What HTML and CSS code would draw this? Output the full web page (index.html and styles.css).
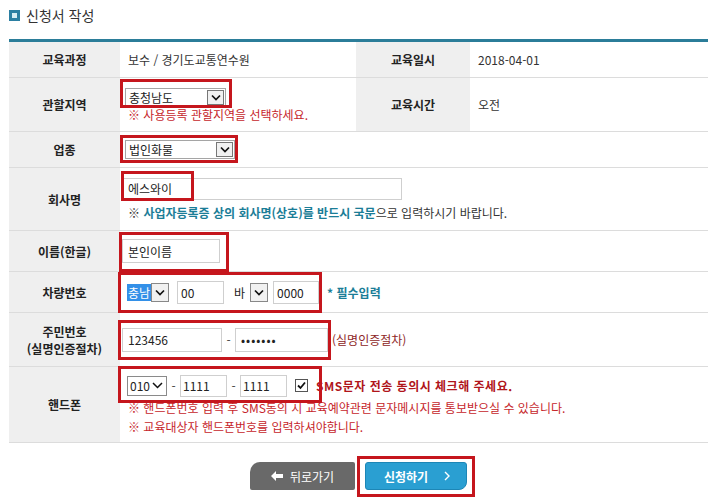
FILE: index.html
```html
<!DOCTYPE html>
<html lang="ko">
<head>
    <meta charset="UTF-8">
    <meta name="viewport" content="width=device-width, initial-scale=1.0">
    <title>신청서 작성</title>
    <link rel="stylesheet" href="styles.css">
</head>
<body>
    <div class="page">
        <h2 class="title"><span class="title-icon"></span>신청서 작성</h2>

        <table class="form-table">
            <colgroup>
                <col class="c-label">
                <col class="c-val1">
                <col class="c-label2">
                <col class="c-val2">
            </colgroup>
            <tr class="r-course">
                <th>교육과정</th>
                <td>보수 / 경기도교통연수원</td>
                <th>교육일시</th>
                <td>2018-04-01</td>
            </tr>
            <tr class="r-region">
                <th>관할지역</th>
                <td>
                    <span class="sel sel-region"><span class="sel-text">충청남도</span><span class="sel-btn"><svg width="10" height="7" viewBox="0 0 10 7"><path d="M1 1.5 L5 5.5 L9 1.5" fill="none" stroke="#111" stroke-width="1.7"/></svg></span></span>
                    <p class="note note-tight red">※ 사용등록 관할지역을 선택하세요.</p>
                </td>
                <th>교육시간</th>
                <td>오전</td>
            </tr>
            <tr class="r-biz">
                <th>업종</th>
                <td colspan="3">
                    <span class="sel sel-biz"><span class="sel-text">법인화물</span><span class="sel-btn"><svg width="10" height="7" viewBox="0 0 10 7"><path d="M1 1.5 L5 5.5 L9 1.5" fill="none" stroke="#111" stroke-width="1.7"/></svg></span></span>
                </td>
            </tr>
            <tr class="r-company">
                <th>회사명</th>
                <td colspan="3">
                    <input type="text" class="inp inp-company" value="에스와이">
                    <p class="note">※ <b class="teal">사업자등록증 상의 회사명(상호)를 반드시 국문</b>으로 입력하시기 바랍니다.</p>
                </td>
            </tr>
            <tr class="r-name">
                <th>이름(한글)</th>
                <td colspan="3">
                    <input type="text" class="inp inp-name" value="본인이름">
                </td>
            </tr>
            <tr class="r-car">
                <th>차량번호</th>
                <td colspan="3">
                    <div class="line">
                        <span class="sel sel-flat sel-area"><span class="sel-text hl">충남</span><span class="sel-btn"><svg width="10" height="7" viewBox="0 0 10 7"><path d="M1 1.5 L5 5.5 L9 1.5" fill="none" stroke="#111" stroke-width="1.7"/></svg></span></span>
                        <input type="text" class="inp inp-car1" value="00">
                        <span class="sel sel-flat sel-kind"><span class="sel-text">바</span><span class="sel-btn"><svg width="10" height="7" viewBox="0 0 10 7"><path d="M1 1.5 L5 5.5 L9 1.5" fill="none" stroke="#111" stroke-width="1.7"/></svg></span></span>
                        <input type="text" class="inp inp-car2" value="0000">
                        <b class="teal required">* 필수입력</b>
                    </div>
                </td>
            </tr>
            <tr class="r-jumin">
                <th class="two-line">주민번호<br>(실명인증절차)</th>
                <td colspan="3">
                    <div class="line">
                        <input type="text" class="inp inp-jumin1" value="123456">
                        <span class="dash">-</span>
                        <input type="password" class="inp inp-jumin2" value="1234567">
                        <span class="brown">(실명인증절차)</span>
                    </div>
                </td>
            </tr>
            <tr class="r-phone">
                <th>핸드폰</th>
                <td colspan="3">
                    <div class="line">
                        <span class="sel sel-phone"><span class="sel-text">010</span><svg width="11" height="7" viewBox="0 0 11 7"><path d="M1 1 L5.5 5.5 L10 1" fill="none" stroke="#111" stroke-width="1.5"/></svg></span>
                        <span class="dash">-</span>
                        <input type="text" class="inp inp-phone" value="1111">
                        <span class="dash">-</span>
                        <input type="text" class="inp inp-phone" value="1111">
                        <span class="chk"><svg width="11" height="11" viewBox="0 0 11 11"><path d="M2 5.5 L4.5 8 L9 2.5" fill="none" stroke="#111" stroke-width="1.8"/></svg></span>
                        <b class="dark-red">SMS문자 전송 동의시 체크해 주세요.</b>
                    </div>
                    <p class="note red">※ 핸드폰번호 입력 후 SMS동의 시 교육예약관련 문자메시지를 통보받으실 수 있습니다.</p>
                    <p class="note red">※ 교육대상자 핸드폰번호를 입력하셔야합니다.</p>
                </td>
            </tr>
        </table>

        <div class="btns">
            <button class="btn btn-back"><svg width="12" height="10" viewBox="0 0 12 10"><path d="M0 5 L5 0 L5 3 L12 3 L12 7 L5 7 L5 10 Z" fill="#fff"/></svg>뒤로가기</button>
            <button class="btn btn-submit">신청하기<svg width="6" height="10" viewBox="0 0 6 10"><path d="M1 1 L5 5 L1 9" fill="none" stroke="#fff" stroke-width="1.4"/></svg></button>
        </div>

        <!-- red highlight boxes drawn over the form -->
        <span class="mark mark-region"></span>
        <span class="mark mark-biz"></span>
        <span class="mark mark-company"></span>
        <span class="mark mark-name"></span>
        <span class="mark mark-car"></span>
        <span class="mark mark-jumin"></span>
        <span class="mark mark-phone"></span>
        <span class="mark mark-submit"></span>
    </div>
</body>
</html>
```

FILE: styles.css
```css
body {
    margin: 0;
    background: #fff;
    font-family: "Noto Sans CJK KR", "Noto Sans", sans-serif;
    font-size: 12px;
    color: #333;
}

.page {
    position: relative;
    width: 720px;
    height: 504px;
}

.title {
    display: flex;
    align-items: center;
    gap: 6px;
    height: 30px;
    margin: 0 0 9px 9px;
    font-size: 14px;
    font-weight: normal;
    color: #333;
}

.title-icon {
    width: 11px;
    height: 11px;
    box-sizing: border-box;
    border: 3px solid #2b7fa2;
    background: #d6edf4;
}

.form-table {
    margin-left: 9px;
    width: 699px;
    table-layout: fixed;
    border-collapse: separate;
    border-spacing: 0;
    border-top: 3px solid #2b7d99;
}

.c-label { width: 111px; }
.c-val1 { width: 236px; }
.c-label2 { width: 114px; }
.c-val2 { width: 238px; }

.form-table th,
.form-table td {
    box-sizing: border-box;
    border-bottom: 1px solid #dcdcdc;
    vertical-align: middle;
    padding: 0;
    line-height: 15px;
}

.form-table th {
    background: #efefef;
    color: #222;
    font-weight: bold;
    text-align: center;
}

.form-table th.two-line {
    line-height: 17px;
}

.form-table td {
    padding-left: 8px;
    text-align: left;
}

.r-course th, .r-course td { height: 36px; }
.r-region th, .r-region td { height: 54px; }
.r-biz th, .r-biz td { height: 36px; }
.r-company th, .r-company td { height: 63px; }
.r-name th, .r-name td { height: 41px; }
.r-car th, .r-car td { height: 41px; }
.r-jumin th, .r-jumin td { height: 54px; }
.r-phone th, .r-phone td { height: 76px; }

.note {
    margin: 2px 0 0;
    line-height: 17px;
}

.note-tight {
    margin: 0;
    line-height: 15px;
}

.red { color: #c6262b; }
.teal { color: #1b7d97; }
.brown { color: #8e2626; margin-left: 4px; }
.dark-red { color: #b0151b; margin-left: 8px; letter-spacing: 0.5px; }

.line {
    display: flex;
    align-items: center;
}

/* fake select boxes */
.sel {
    display: inline-flex;
    align-items: center;
    justify-content: space-between;
    box-sizing: border-box;
    height: 19px;
    border: 1px solid #a5a5a5;
    background: #fff;
    padding: 0 1px 0 3px;
    color: #222;
    vertical-align: middle;
}

.sel-btn {
    display: flex;
    align-items: center;
    justify-content: center;
    box-sizing: border-box;
    width: 17px;
    height: 15px;
    border: 1px solid #777;
    background: #f1f1f1;
}

.sel-region {
    width: 101px;
    margin-left: -3px;
}

.sel-biz {
    width: 110px;
    margin-left: -3px;
}

.sel-flat {
    border: none;
    padding: 0;
    height: 19px;
}

.sel-flat .sel-btn {
    height: 19px;
    width: 18px;
    border-color: #888;
}

.sel-area { margin-left: -1px; }
.sel-kind { margin-left: 10px; }

.sel-kind .sel-text { width: 16px; }

.hl {
    background: #3390e8;
    color: #fff;
    padding: 1px 1px;
}

.sel-phone {
    width: 40px;
    height: 20px;
    margin-left: -1px;
    padding: 0 3px 0 2px;
    border-color: #8a8a8a;
}

/* text inputs */
.inp {
    box-sizing: border-box;
    height: 22px;
    border: 1px solid #cfcfcf;
    padding: 0 5px;
    font-family: "Noto Sans CJK KR", "Noto Sans", sans-serif;
    font-size: 12px;
    color: #222;
    background: #fff;
}

.inp-company {
    width: 280px;
    margin-left: -6px;
    display: block;
    margin-bottom: 4px;
}

.inp-name {
    width: 98px;
    height: 24px;
    margin-left: -6px;
}

.inp-car1 {
    width: 47px;
    height: 23px;
    margin-left: 8px;
    padding-left: 3px;
}

.inp-car2 {
    width: 46px;
    height: 23px;
    margin-left: 5px;
    padding-left: 3px;
}

.required { margin-left: 8px; }

.inp-jumin1 {
    width: 100px;
    height: 24px;
    margin-left: -6px;
}

.inp-jumin2 {
    width: 93px;
    height: 24px;
    letter-spacing: 1px;
}

.inp-phone {
    width: 47px;
    height: 22px;
    padding-left: 2px;
}

.dash {
    width: 13px;
    text-align: center;
    color: #444;
}

.chk {
    display: flex;
    align-items: center;
    justify-content: center;
    box-sizing: border-box;
    width: 13px;
    height: 13px;
    border: 1px solid #555;
    background: #fff;
    margin-left: 8px;
}

/* bottom buttons */
.btns {
    margin: 19px 0 0 9px;
    width: 699px;
    display: flex;
    justify-content: center;
    gap: 10px;
}

.btn {
    display: flex;
    align-items: center;
    justify-content: center;
    height: 28px;
    border: none;
    color: #fff;
    font-family: "Noto Sans CJK KR", "Noto Sans", sans-serif;
    font-size: 12px;
    cursor: pointer;
}

.btn-back {
    width: 105px;
    gap: 7px;
    background: #696969;
    border-radius: 10px 2px 2px 2px;
}

.btn-submit {
    width: 102px;
    gap: 16px;
    background: #2a9fd2;
    border: 1px solid #1d86b6;
    border-radius: 3px 3px 8px 3px;
    font-weight: bold;
    padding-left: 8px;
}

/* red annotation boxes */
.mark {
    position: absolute;
    box-sizing: border-box;
    border: 3px solid #c5161d;
    pointer-events: none;
}

.mark-region { left: 120px; top: 79px; width: 112px; height: 29px; }
.mark-biz { left: 120px; top: 135px; width: 118px; height: 28px; }
.mark-company { left: 121px; top: 171px; width: 73px; height: 30px; }
.mark-name { left: 119px; top: 232px; width: 110px; height: 40px; }
.mark-car { left: 118px; top: 272px; width: 204px; height: 41px; }
.mark-jumin { left: 118px; top: 320px; width: 213px; height: 40px; }
.mark-phone { left: 118px; top: 366px; width: 204px; height: 37px; }
.mark-submit { left: 357px; top: 456px; width: 118px; height: 41px; }
```
